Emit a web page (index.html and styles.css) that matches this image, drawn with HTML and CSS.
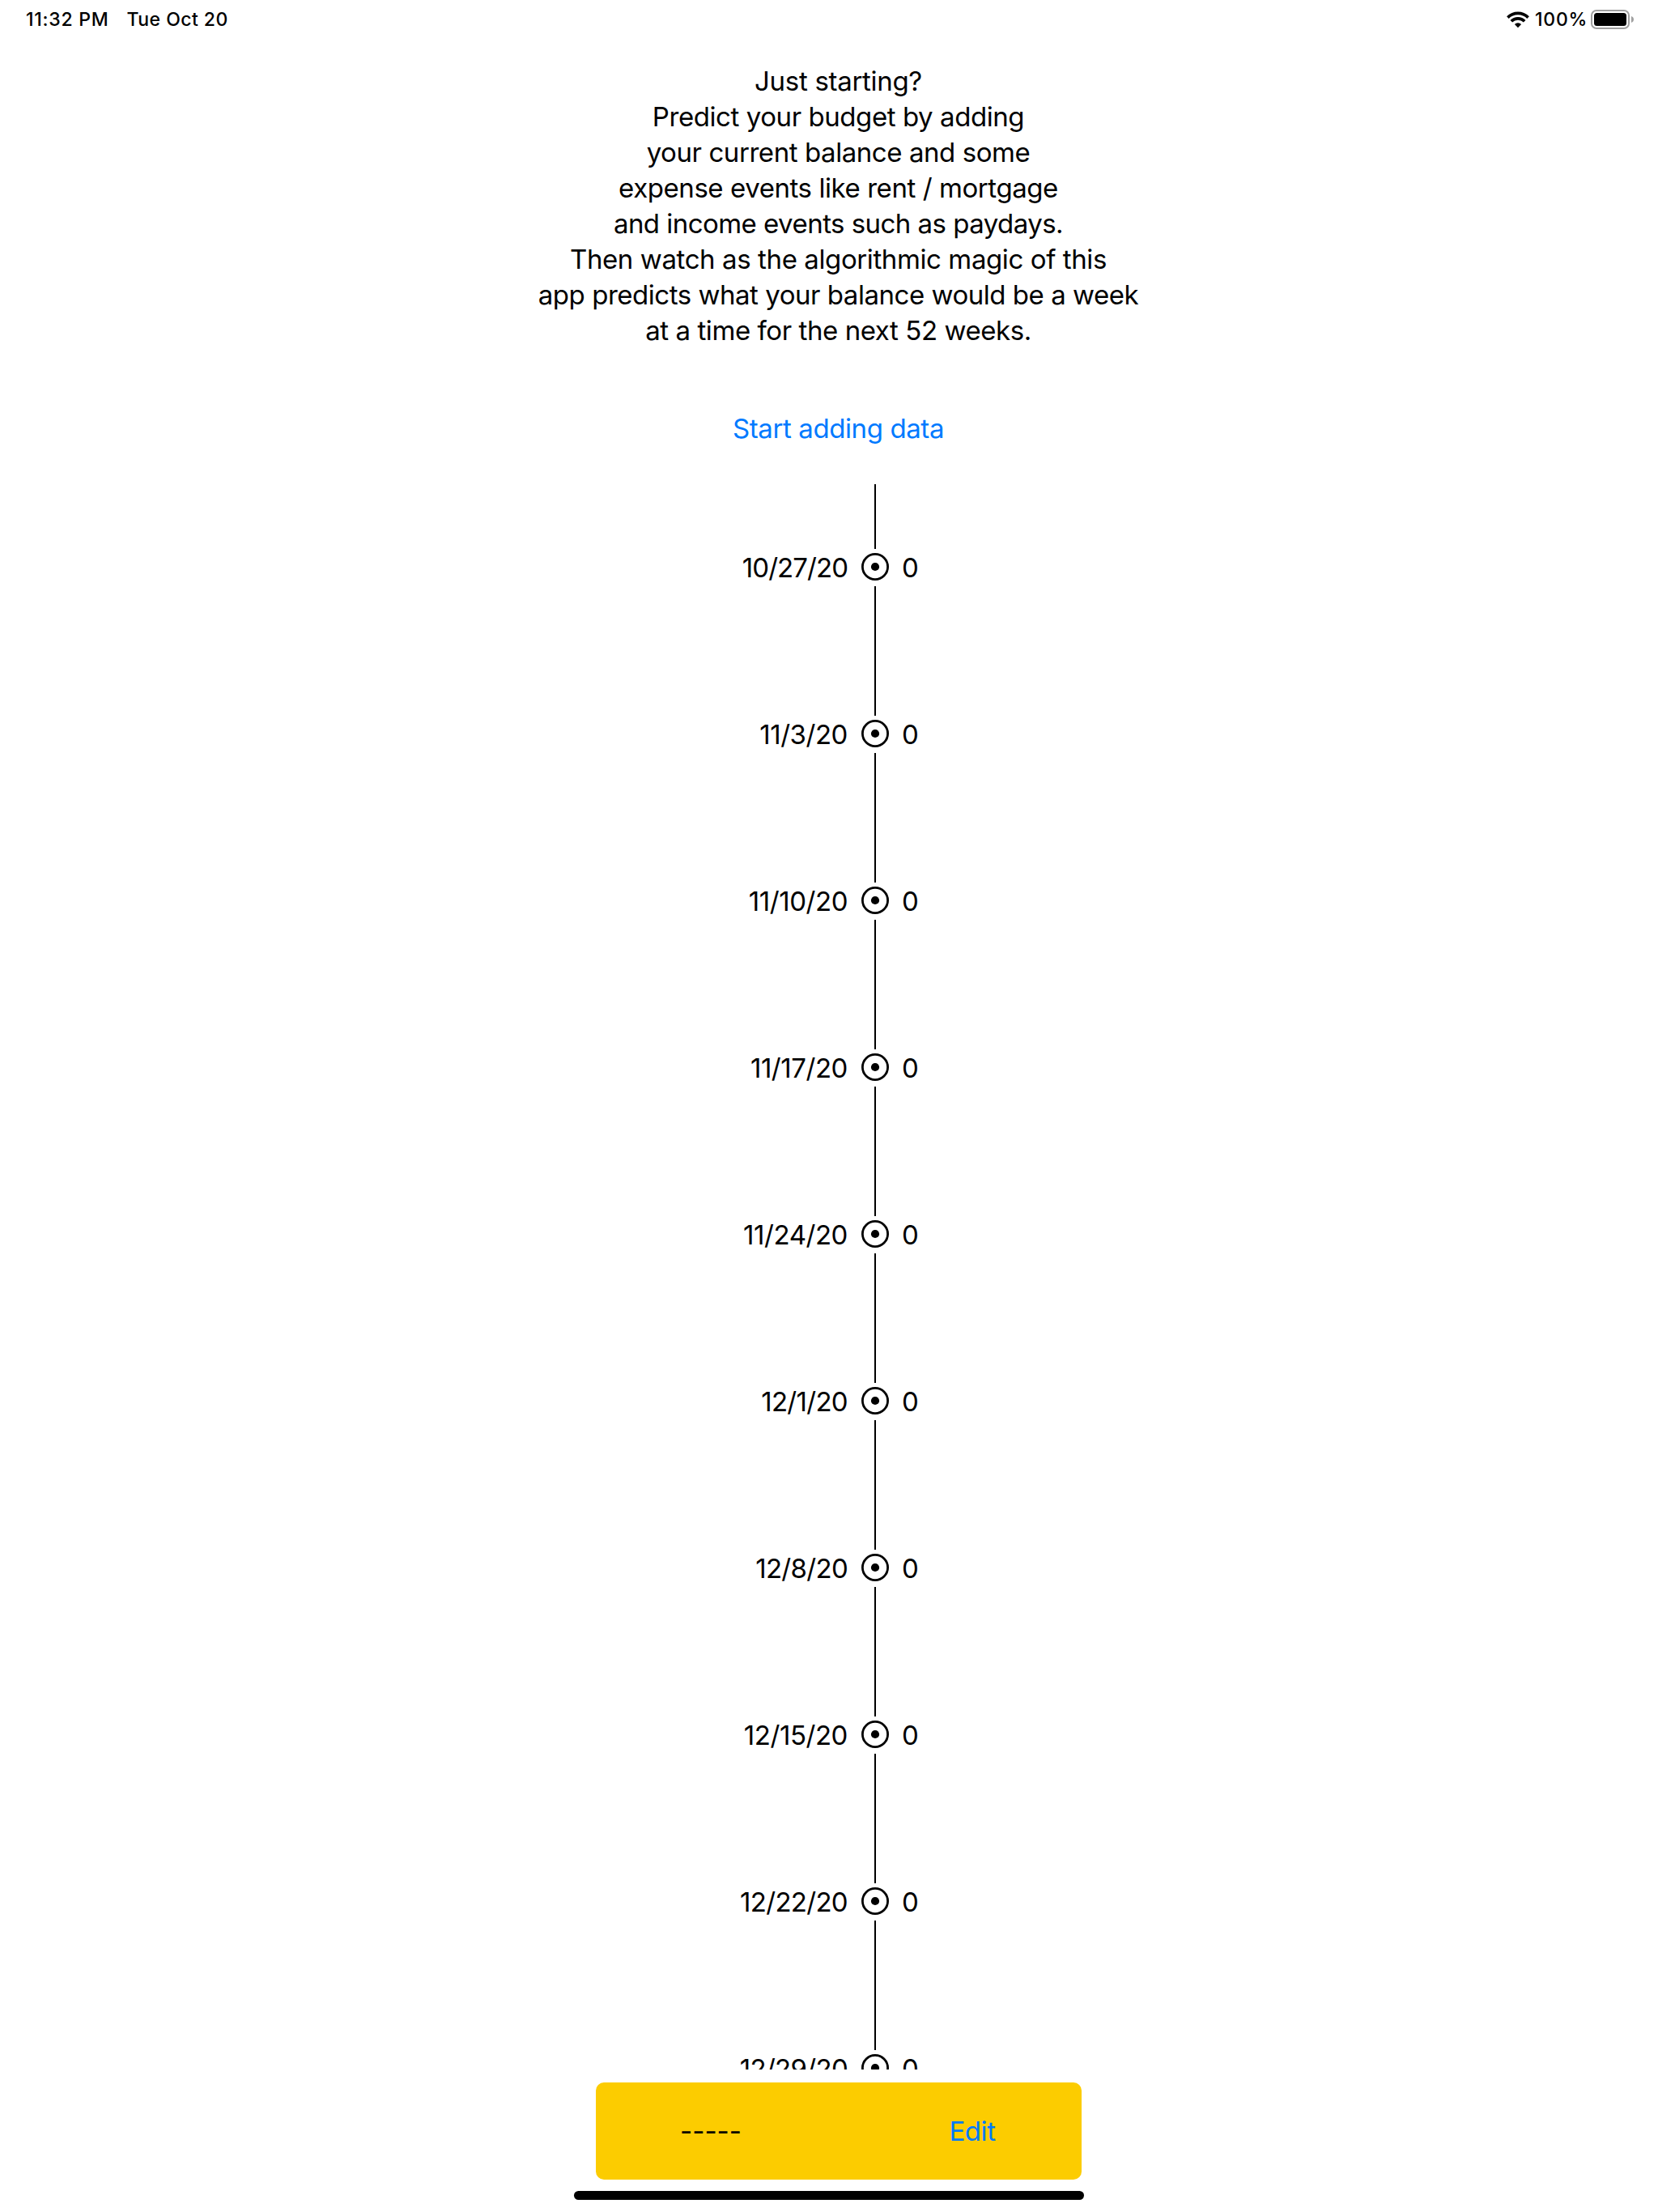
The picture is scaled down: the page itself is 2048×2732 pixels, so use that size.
FILE: index.html
```html
<!DOCTYPE html>
<html lang="en">
<head>
<meta charset="utf-8">
<title>Budget</title>
<link rel="stylesheet" href="styles.css">
</head>
<body>
<header class="status">
  <div class="status-left"><span class="clock">11:32 PM</span><span class="day">Tue Oct 20</span></div>
  <div class="status-right">
    <svg class="wifi" viewBox="0 0 28 21" width="28" height="21">
      <g fill="none" stroke="#000" stroke-width="3.7">
        <path d="M1.4 7.6a18 18 0 0 1 25.2 0"/>
        <path d="M5.8 12.2a11.7 11.7 0 0 1 16.4 0"/>
      </g>
      <path d="M14 20.2l-4.1-4.2a5.8 5.8 0 0 1 8.2 0z"/>
    </svg>
    <span class="percent">100%</span>
    <svg class="battery" viewBox="0 0 54 24" width="54" height="24">
      <rect x="1" y="1" width="46" height="22" rx="6" fill="none" stroke="#a0a0a0" stroke-width="2"/>
      <rect x="4" y="4" width="40" height="16" rx="3.5"/>
      <path d="M50 8c4 1.200 4 6.800 0 8z" fill="#a0a0a0"/>
    </svg>
  </div>
</header>
<main class="content">
  <p class="intro">
    <span>Just starting?</span>
    <span>Predict your budget by adding</span>
    <span>your current balance and some</span>
    <span>expense events like rent / mortgage</span>
    <span>and income events such as paydays.</span>
    <span>Then watch as the algorithmic magic of this</span>
    <span>app predicts what your balance would be a week</span>
    <span>at a time for the next 52 weeks.</span>
  </p>
  <a class="start">Start adding data</a>
  <ol class="timeline">
    <li class="tighter"><i class="line"></i><span class="date">10/27/20</span><svg class="node" viewBox="0 0 34 34"><circle class="ring" cx="17" cy="17" r="15.600"/><circle cx="17" cy="17" r="5.100"/></svg><span class="amount">0</span></li>
    <li><i class="line"></i><span class="date">11/3/20</span><svg class="node" viewBox="0 0 34 34"><circle class="ring" cx="17" cy="17" r="15.600"/><circle cx="17" cy="17" r="5.100"/></svg><span class="amount">0</span></li>
    <li><i class="line"></i><span class="date">11/10/20</span><svg class="node" viewBox="0 0 34 34"><circle class="ring" cx="17" cy="17" r="15.600"/><circle cx="17" cy="17" r="5.100"/></svg><span class="amount">0</span></li>
    <li><i class="line"></i><span class="date">11/17/20</span><svg class="node" viewBox="0 0 34 34"><circle class="ring" cx="17" cy="17" r="15.600"/><circle cx="17" cy="17" r="5.100"/></svg><span class="amount">0</span></li>
    <li><i class="line"></i><span class="date">11/24/20</span><svg class="node" viewBox="0 0 34 34"><circle class="ring" cx="17" cy="17" r="15.600"/><circle cx="17" cy="17" r="5.100"/></svg><span class="amount">0</span></li>
    <li class="tight"><i class="line"></i><span class="date">12/1/20</span><svg class="node" viewBox="0 0 34 34"><circle class="ring" cx="17" cy="17" r="15.600"/><circle cx="17" cy="17" r="5.100"/></svg><span class="amount">0</span></li>
    <li class="tight"><i class="line"></i><span class="date">12/8/20</span><svg class="node" viewBox="0 0 34 34"><circle class="ring" cx="17" cy="17" r="15.600"/><circle cx="17" cy="17" r="5.100"/></svg><span class="amount">0</span></li>
    <li><i class="line"></i><span class="date">12/15/20</span><svg class="node" viewBox="0 0 34 34"><circle class="ring" cx="17" cy="17" r="15.600"/><circle cx="17" cy="17" r="5.100"/></svg><span class="amount">0</span></li>
    <li class="tight"><i class="line"></i><span class="date">12/22/20</span><svg class="node" viewBox="0 0 34 34"><circle class="ring" cx="17" cy="17" r="15.600"/><circle cx="17" cy="17" r="5.100"/></svg><span class="amount">0</span></li>
    <li class="tight"><i class="line"></i><span class="date">12/29/20</span><svg class="node" viewBox="0 0 34 34"><circle class="ring" cx="17" cy="17" r="15.600"/><circle cx="17" cy="17" r="5.100"/></svg><span class="amount">0</span></li>
  </ol>
</main>
<footer class="panel"><span class="balance">-----</span><a class="edit">Edit</a></footer>
<div class="home-bar"></div>
</body>
</html>
```
FILE: styles.css
```css
* { box-sizing: border-box; }
body {
  margin: 0;
  height: 2732px;
  display: flex;
  flex-direction: column;
  overflow: hidden;
  background: #fff;
  color: #000;
  font: 400 33px/44px Inter, "Liberation Sans", sans-serif;
}
.status {
  height: 48px;
  padding: 0 29px 0 32px;
  display: flex;
  justify-content: space-between;
  font-size: 23px;
  font-weight: 500;
  line-height: 48px;
}
.status-left { display: flex; gap: 22px; }
.clock { letter-spacing: 0.75px; }
.day { letter-spacing: 0.45px; }
.status-right { display: flex; align-items: center; }
.percent { margin: 0 4px 0 7px; letter-spacing: 0.7px; }
.content {
  height: 2508px;
  padding: 30px 0 0 23px;
  overflow: hidden;
  display: flex;
  flex-direction: column;
}
.intro { margin: 0; text-align: center; white-space: nowrap; letter-spacing: -0.43px; }
.intro span { display: block; }
.intro span:nth-child(1) { letter-spacing: -0.3px; }
.intro span:nth-child(5) { letter-spacing: -0.54px; }
.intro span:nth-child(6) { letter-spacing: -0.4px; }
.intro span:nth-child(7) { letter-spacing: -0.47px; }
.start { margin-top: 77px; text-align: center; color: #007aff; letter-spacing: -0.4px; }
.timeline { list-style: none; margin: 47px 0 0; padding: 0; }
.timeline li {
  display: grid;
  grid-template-columns: 1041px 34px 1fr;
  grid-template-rows: 160px 46px;
}
.timeline li:first-child { grid-template-rows: 80px 46px; }
.line { grid-column: 2; width: 2px; background: #000; justify-self: center; }
.date, .amount { grid-row: 2; padding-top: 1px; }
.date { grid-column: 1; padding-right: 17px; text-align: right; letter-spacing: -0.45px; }
.tight .date { letter-spacing: -0.7px; }
.tighter .date { letter-spacing: -0.95px; }
.node { grid-column: 2; grid-row: 2; width: 34px; height: 34px; margin-top: 5px; }
.ring { fill: none; stroke: #000; stroke-width: 2.8px; }
.amount { grid-column: 3; padding-left: 16px; }
.panel {
  width: 600px;
  height: 120px;
  margin: 16px 0 0 736px;
  border-radius: 10px;
  background: #fccc00;
  display: grid;
  grid-template-columns: 284px 1fr;
  align-items: center;
  text-align: center;
}
.edit { color: #007aff; padding-left: 46px; letter-spacing: -0.4px; }
.home-bar {
  width: 630px;
  height: 11px;
  margin: 14px 0 0 709px;
  border-radius: 6px;
  background: #000;
}
```
